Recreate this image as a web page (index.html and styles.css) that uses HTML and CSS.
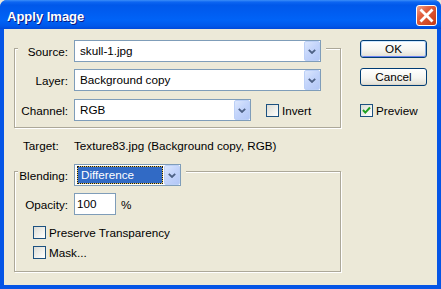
FILE: index.html
```html
<!DOCTYPE html>
<html>
<head>
<meta charset="utf-8">
<title>Apply Image</title>
<link rel="stylesheet" href="styles.css">
</head>
<body>
<div class="window">
  <div class="titlebar">
    <span class="title">Apply Image</span>
    <span class="close"><svg width="19" height="19" viewBox="0 0 19 19"><path d="M4.5 4.5 L14.5 14.5 M14.5 4.5 L4.5 14.5" stroke="#fff" stroke-width="2.8" stroke-linecap="square"/></svg></span>
  </div>
  <div class="client">
    <div class="left">
      <div class="group g1">
        <div class="row head">
          <span class="lbl">Source:</span>
          <div class="combo w-wide"><span class="val">skull-1.jpg</span><span class="drop"><svg width="8" height="5" viewBox="0 0 8 5"><polyline points="0.8,0.8 4,4 7.2,0.8" fill="none" stroke="#4d6185" stroke-width="1.8"/></svg></span></div>
        </div>
        <div class="row r-layer">
          <span class="lbl">Layer:</span>
          <div class="combo w-wide"><span class="val">Background copy</span><span class="drop"><svg width="8" height="5" viewBox="0 0 8 5"><polyline points="0.8,0.8 4,4 7.2,0.8" fill="none" stroke="#4d6185" stroke-width="1.8"/></svg></span></div>
        </div>
        <div class="row r-channel">
          <span class="lbl">Channel:</span>
          <div class="combo w-chan"><span class="val">RGB</span><span class="drop"><svg width="8" height="5" viewBox="0 0 8 5"><polyline points="0.8,0.8 4,4 7.2,0.8" fill="none" stroke="#4d6185" stroke-width="1.8"/></svg></span></div>
          <div class="check invert"><span class="box"></span><span class="ctext">Invert</span></div>
        </div>
      </div>
      <div class="target"><span class="tlbl">Target:</span><span>Texture83.jpg (Background copy, RGB)</span></div>
      <div class="group g2">
        <div class="row head head2">
          <span class="lbl">Blending:</span>
          <div class="combo w-blend"><span class="hl">Difference</span><span class="drop"><svg width="8" height="5" viewBox="0 0 8 5"><polyline points="0.8,0.8 4,4 7.2,0.8" fill="none" stroke="#4d6185" stroke-width="1.8"/></svg></span></div>
        </div>
        <div class="row r-opacity">
          <span class="lbl">Opacity:</span>
          <div class="input">100</div>
          <span class="pct">%</span>
        </div>
        <div class="check c-preserve"><span class="box"></span><span class="ctext">Preserve Transparency</span></div>
        <div class="check c-mask"><span class="box"></span><span class="ctext">Mask...</span></div>
      </div>
    </div>
    <div class="right">
      <button class="btn default">OK</button>
      <button class="btn cancel">Cancel</button>
      <div class="check preview"><span class="box"><svg width="11" height="11" viewBox="0 0 11 11"><polyline points="2,5 4.3,7.6 9,2.5" fill="none" stroke="#21a121" stroke-width="2"/></svg></span><span class="ctext">Preview</span></div>
    </div>
  </div>
</div>
</body>
</html>
```
FILE: styles.css
```css
* { box-sizing: border-box; }
html, body { margin: 0; padding: 0; }
html { background: #e9e7dc; }
body {
  font-family: "Liberation Sans", Arial, sans-serif;
  font-size: 11.7px;
  color: #000;
}
.window {
  width: 441px;
  height: 289px;
  display: flex;
  flex-direction: column;
  background: #0555e6;
  border-radius: 7px 7px 0 0;
  overflow: hidden;
}
.titlebar {
  height: 29px;
  flex: none;
  display: flex;
  align-items: flex-start;
  padding-left: 7px;
  background: linear-gradient(to bottom, #3b8ef8 0px, #0d66f2 2px, #0058ea 5px, #005ef2 14px, #0063f7 20px, #0058ea 26px, #0049da 29px);
}
.title {
  margin-top: 9px;
  color: #fff;
  font-weight: bold;
  font-size: 13px;
  line-height: 15px;
  text-shadow: 1px 1px 0 #0a1883;
}
.close {
  margin-left: auto;
  margin-right: 4px;
  margin-top: 5px;
  width: 21px;
  height: 21px;
  border: 1px solid #fff;
  border-radius: 3px;
  background: linear-gradient(135deg, #f2a48c 0%, #e2603f 35%, #d44a26 70%, #c43a16 100%);
  display: flex;
  align-items: center;
  justify-content: center;
}
.close svg { display: block; }
.client {
  flex: 1;
  margin: 0 4px 4px 4px;
  background: #ece9d8;
  display: flex;
  align-items: flex-start;
  padding-top: 11px;
  padding-left: 10px;
}
.left {
  width: 327px;
  padding-top: 8px;
  display: flex;
  flex-direction: column;
}
.group {
  border: 1px solid #aca899;
  box-shadow: inset 1px 1px 0 #fff, 1px 1px 0 #fff;
  display: flex;
  flex-direction: column;
  align-items: flex-start;
  padding-left: 3px;
}
.g1 { padding-bottom: 6px; }
.g2 { padding-bottom: 12px; }
.row {
  display: flex;
  align-items: center;
  height: 22px;
}
.head {
  margin-top: -9px;
  background: #ece9d8;
  padding-right: 5px;
}
.head2 { margin-top: -8px; }
.r-layer { margin-top: 7px; }
.r-channel { margin-top: 8px; }
.r-opacity { margin-top: 7px; }
.lbl {
  width: 50px;
  text-align: right;
  margin-right: 6px;
  white-space: nowrap;
}
.combo {
  height: 22px;
  border: 1px solid #7f9db9;
  background: #fff;
  display: flex;
  align-items: stretch;
}
.w-wide { width: 247px; }
.w-chan { width: 177px; }
.w-blend { width: 107px; }
.val {
  flex: 1;
  padding-left: 5px;
  line-height: 20px;
  white-space: nowrap;
}
.hl {
  flex: 1;
  margin: 1px 1px 1px 2px;
  background: #316ac5;
  color: #fff;
  line-height: 16px;
  padding-left: 3px;
  border: 1px solid #e8c860;
  outline: 1px dotted #1a1a1a;
  outline-offset: -1px;
}
.drop {
  width: 16px;
  flex: none;
  border: 1px solid #bcd0f7;
  border-radius: 2px;
  background: linear-gradient(135deg, #dce7fd 0%, #c4d5fb 45%, #b3c7f6 100%);
  display: flex;
  align-items: center;
  justify-content: center;
}
.drop svg { display: block; }
.check {
  display: flex;
  align-items: center;
  height: 13px;
  white-space: nowrap;
}
.box {
  width: 13px;
  height: 13px;
  flex: none;
  border: 1px solid #1c5180;
  background: linear-gradient(135deg, #dcdcd5 0%, #eeeee9 50%, #ffffff 100%);
  display: flex;
  align-items: center;
  justify-content: center;
}
.box svg { display: block; }
.ctext { margin-left: 3px; line-height: 13px; }
.invert { margin-left: 15px; }
.target {
  margin-top: 11px;
  padding-left: 9px;
  line-height: 14px;
  display: flex;
  white-space: nowrap;
}
.tlbl { width: 51px; }
.g2 { margin-top: 18px; }
.input {
  width: 42px;
  height: 22px;
  border: 1px solid #7f9db9;
  background: #fff;
  padding-left: 2px;
  line-height: 20px;
}
.pct { margin-left: 5px; }
.c-preserve { margin-top: 11px; margin-left: 15px; }
.c-mask { margin-top: 7px; margin-left: 15px; }
.right {
  margin-left: 19px;
  display: flex;
  flex-direction: column;
  align-items: flex-start;
}
.btn {
  width: 67px;
  height: 18px;
  margin: 0;
  padding: 0;
  font: inherit;
  color: #000;
  border: 1px solid #003c74;
  border-radius: 3px;
  background: linear-gradient(to bottom, #ffffff 0%, #f6f5f0 55%, #e6e4da 90%, #d6d0c5 100%);
  display: flex;
  align-items: center;
  justify-content: center;
  line-height: 14px;
}
.default {
  box-shadow: inset 0 1px 0 #cee7ff, inset 1px 0 0 #bcd4f6, inset -1px 0 0 #89ade4, inset 0 -1px 0 #6982ee;
}
.cancel { margin-top: 10px; }
.preview { margin-top: 18px; }
```
